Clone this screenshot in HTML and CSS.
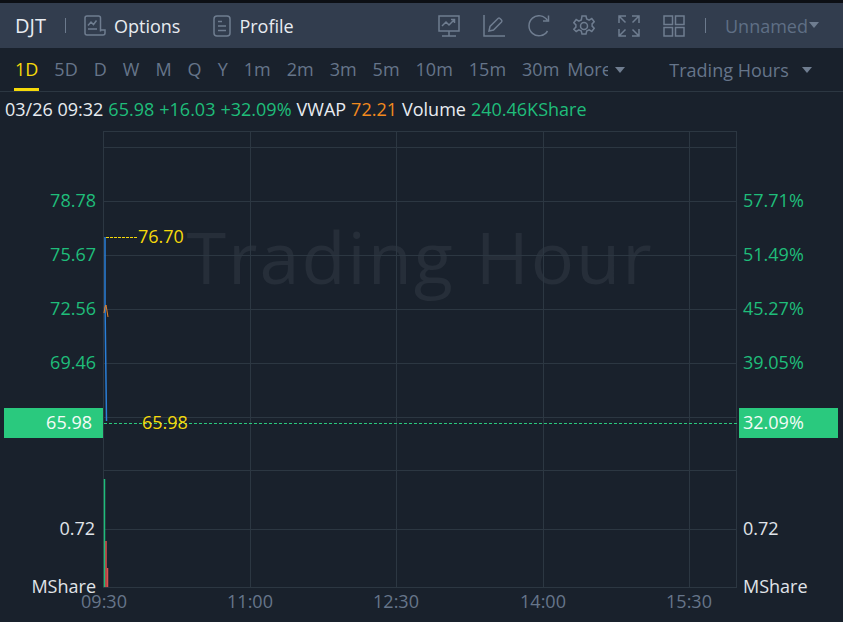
FILE: index.html
```html
<!DOCTYPE html>
<html lang="en">
<head>
    <meta charset="UTF-8">
    <meta name="viewport" content="width=device-width, initial-scale=1.0">
    <title>DJT Chart</title>
    <link rel="stylesheet" href="styles.css">
</head>
<body>
    <header class="top-bar">
        <span class="symbol">DJT</span>
        <span class="divider"></span>
        <div class="top-link options-link">
            <svg class="top-icon" width="22" height="22" viewBox="0 0 22 22">
                <path d="M16.500 16.500V3a2 2 0 0 0-2-2H3a2 2 0 0 0-2 2v15a2 2 0 0 0 2 2h16a2 2 0 0 0 2-2v-3h-4.500"/>
                <path d="M4 10.500l3-3.500 2.500 2.500 3-4"/>
                <path d="M4 14h9"/>
            </svg>
            <span>Options</span>
        </div>
        <div class="top-link profile-link">
            <svg class="top-icon" width="18" height="22" viewBox="0 0 18 22">
                <rect x="1" y="1" width="16" height="20" rx="3"/>
                <path d="M5 6.500h4M5 11h8M5 15.500h8"/>
            </svg>
            <span>Profile</span>
        </div>
        <div class="top-tools">
            <svg class="tool-icon" width="22" height="22" viewBox="0 0 22 22">
                <rect x="1" y="1" width="20" height="15"/>
                <path d="M4 11l4-4 3 3 5-5M13 4.500h3.500V8"/>
                <path d="M11 16v5M4 21h14"/>
            </svg>
            <svg class="tool-icon" width="22" height="22" viewBox="0 0 22 22">
                <path d="M1 0v21h21"/>
                <path d="M6 16l1-4.500 8-8a1.500 1.500 0 0 1 2 0l1.500 1.500a1.500 1.500 0 0 1 0 2l-8 8z"/>
            </svg>
            <svg class="tool-icon" width="22" height="22" viewBox="0 0 22 22">
                <path d="M19.500 16a10 10 0 1 1 0-10.500"/>
                <path d="M20.500 0.500v5.500H15"/>
            </svg>
            <svg class="tool-icon" width="22" height="22" viewBox="0 0 22 22">
                <path d="M9 1h4l.7 3 2.400 1.100 2.700-1.600 2.400 3.200-2.100 2.200v2.200l2.100 2.200-2.400 3.200-2.700-1.600-2.400 1.100-.7 3H9l-.7-3-2.400-1.100-2.700 1.600L.8 14.300l2.100-2.200V9.900L.8 7.700l2.400-3.200 2.700 1.600 2.400-1.100z"/>
                <circle cx="11" cy="11" r="3.500"/>
            </svg>
            <svg class="tool-icon" width="22" height="22" viewBox="0 0 22 22">
                <path d="M1 8V1h7M1 1l6.500 6.500M14 1h7v7M21 1l-6.500 6.500M1 14v7h7M1 21l6.500-6.500M21 14v7h-7M21 21l-6.500-6.500"/>
            </svg>
            <svg class="tool-icon" width="22" height="22" viewBox="0 0 22 22">
                <rect x="1" y="1" width="8.500" height="8.500"/>
                <rect x="12.500" y="1" width="8.500" height="8.500"/>
                <rect x="1" y="12.500" width="8.500" height="8.500"/>
                <rect x="12.500" y="12.500" width="8.500" height="8.500"/>
            </svg>
        </div>
        <span class="divider layout-divider"></span>
        <span class="layout-name">Unnamed</span>
        <span class="caret"></span>
    </header>

    <nav class="tab-bar">
        <span class="tab active">1D</span>
        <span class="tab">5D</span>
        <span class="tab">D</span>
        <span class="tab">W</span>
        <span class="tab">M</span>
        <span class="tab">Q</span>
        <span class="tab">Y</span>
        <span class="tab">1m</span>
        <span class="tab">2m</span>
        <span class="tab">3m</span>
        <span class="tab">5m</span>
        <span class="tab">10m</span>
        <span class="tab">15m</span>
        <span class="tab">30m</span>
        <span class="tab more">More</span>
        <span class="caret more-caret"></span>
        <span class="session">Trading Hours</span>
        <span class="caret session-caret"></span>
    </nav>

    <div class="quote-line">
        <span>03/26 09:32</span>
        <span class="green">65.98</span>
        <span class="green">+16.03</span>
        <span class="green">+32.09%</span>
        <span>VWAP</span>
        <span class="orange">72.21</span>
        <span>Volume</span>
        <span class="green">240.46KShare</span>
    </div>

    <svg class="chart" width="843" height="497" viewBox="0 125 843 497">
        <text class="watermark" x="420" y="283">Trading Hour</text>

        <g class="grid">
            <path d="M103 130.500H737M103 146.500H737M103 200.500H737M103 254.500H737M103 308.500H737M103 362.500H737M103 416.500H737M103 469.500H737M103 528.500H737M103 586.500H737"/>
            <path d="M103.500 130V587M250.500 130V587M396.500 130V587M543.500 130V587M689.500 130V587M736.500 130V587"/>
        </g>

        <path class="price-line" d="M105 236L105 300L106.500 420"/>
        <path class="vwap-line" d="M104 312L105 306L106 304L107 310L108 316"/>
        <path class="high-dash" d="M106 236.500H138"/>
        <path class="last-dash" d="M104 422.500H737"/>

        <path class="vol-up" d="M104.500 478V586"/>
        <path class="vol-down" d="M106 540V586"/>
        <path class="vol-down thin" d="M107.500 567V586"/>

        <g class="axis-left green-fill">
            <text x="96" y="206">78.78</text>
            <text x="96" y="260">75.67</text>
            <text x="96" y="314">72.56</text>
            <text x="96" y="368">69.46</text>
        </g>
        <g class="axis-right green-fill">
            <text x="743" y="206">57.71%</text>
            <text x="743" y="260">51.49%</text>
            <text x="743" y="314">45.27%</text>
            <text x="743" y="368">39.05%</text>
        </g>

        <rect class="last-tag" x="4" y="407" width="99" height="30"/>
        <rect class="last-tag" x="739" y="407" width="99" height="30"/>
        <text class="tag-text axis-left" x="92" y="428">65.98</text>
        <text class="tag-text" x="743" y="428">32.09%</text>

        <text class="marker" x="138" y="242">76.70</text>
        <text class="marker" x="142" y="428">65.98</text>

        <g class="axis-left white-fill">
            <text x="95" y="534">0.72</text>
            <text x="96" y="592">MShare</text>
        </g>
        <g class="white-fill">
            <text x="743" y="534">0.72</text>
            <text x="743" y="592">MShare</text>
        </g>

        <g class="axis-time">
            <text x="104" y="607">09:30</text>
            <text x="250" y="607">11:00</text>
            <text x="396" y="607">12:30</text>
            <text x="543" y="607">14:00</text>
            <text x="689" y="607">15:30</text>
        </g>
    </svg>
</body>
</html>
```

FILE: styles.css
```css
* {
    box-sizing: border-box;
}
body {
    margin: 0;
    width: 843px;
    height: 622px;
    overflow: hidden;
    background: #19212c;
    border-top: 3px solid #0c0f14;
    font-family: 'Open Sans', 'Noto Sans', sans-serif;
    font-size: 18px;
    color: #e8ecf1;
}
.top-bar {
    height: 45px;
    display: flex;
    align-items: center;
    padding-left: 15px;
    background: #323d4e;
}
.symbol {
    font-size: 20px;
    width: 35px;
}
.divider {
    width: 1px;
    height: 15px;
    margin-left: 15px;
    background: #6c7a8d;
}
.top-link {
    display: flex;
    align-items: center;
    gap: 8px;
}
.options-link {
    margin-left: 18px;
}
.profile-link {
    margin-left: 33px;
}
.top-icon, .tool-icon {
    fill: none;
    stroke: #6f7d90;
    stroke-width: 1.5;
}
.top-tools {
    margin-left: auto;
    display: flex;
    gap: 23px;
}
.layout-divider {
    margin-left: 20px;
}
.layout-name {
    margin-left: 19px;
    color: #5f6f85;
}
.caret {
    width: 0;
    height: 0;
    border-left: 5px solid transparent;
    border-right: 5px solid transparent;
    border-top: 6px solid #6f7d90;
}
.top-bar .caret {
    margin: 0 24px 2px 1px;
}
.tab-bar {
    height: 44px;
    display: flex;
    align-items: center;
    gap: 16px;
    padding-left: 15px;
    border-bottom: 1px solid #2c3742;
    color: #66758a;
}
.tab {
    position: relative;
    line-height: 43px;
}
.tab.active {
    color: #f5d90a;
}
.tab.active::after {
    content: "";
    position: absolute;
    left: -1px;
    right: -1px;
    bottom: 0;
    height: 3px;
    background: #f5d90a;
}
.tab.more {
    width: 41px;
    overflow: hidden;
    margin-left: -8px;
}
.more-caret {
    margin-left: -9px;
}
.session {
    margin-left: 28px;
}
.session-caret {
    margin-left: -3px;
}
.quote-line {
    height: 34px;
    display: flex;
    align-items: center;
    gap: 5px;
    padding-left: 5px;
}
.green {
    color: #1fbd7a;
}
.orange {
    color: #f28a1e;
}
.chart {
    display: block;
    font-size: 18px;
}
.chart text {
    font-family: 'Open Sans', 'Noto Sans', sans-serif;
}
.watermark {
    font-size: 72px;
    letter-spacing: 2px;
    fill: #262e39;
    text-anchor: middle;
}
.grid path {
    fill: none;
    stroke: #2c3742;
    stroke-width: 1;
}
.price-line {
    fill: none;
    stroke: #2a7fd8;
    stroke-width: 1.500;
}
.vwap-line {
    fill: none;
    stroke: #e8832a;
    stroke-width: 1;
}
.high-dash {
    stroke: #f5d90a;
    stroke-width: 1;
    stroke-dasharray: 3 1;
}
.last-dash {
    stroke: #2ac97e;
    stroke-width: 1;
    stroke-dasharray: 3 2;
}
.vol-up {
    stroke: #1fbd7a;
    stroke-width: 1.500;
}
.vol-down {
    stroke: #d9534f;
    stroke-width: 1.500;
}
.last-tag {
    fill: #2ac97e;
}
.tag-text {
    fill: #f4fbf7;
}
.axis-left {
    text-anchor: end;
}
.green-fill {
    fill: #1fbd7a;
}
.white-fill {
    fill: #e0e4e9;
}
.marker {
    fill: #f5d90a;
}
.axis-time {
    fill: #66758a;
    text-anchor: middle;
}
```
